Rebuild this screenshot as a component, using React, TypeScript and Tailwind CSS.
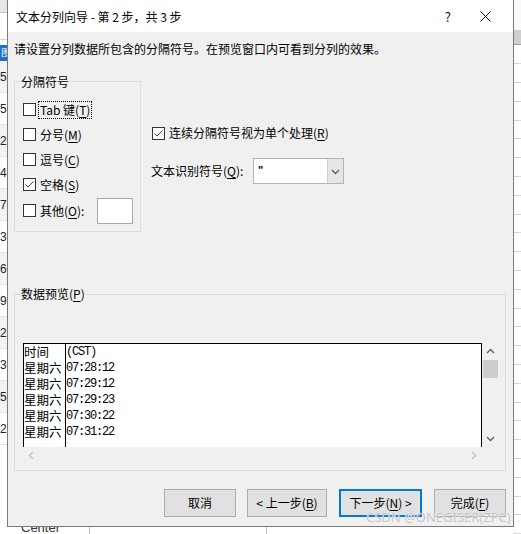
import React from "react";

const ui = "font-['Noto_Sans_CJK_SC','Noto_Sans',sans-serif]";

function Check({ checked }: { checked?: boolean }) {
  return (
    <span className="w-[13px] h-[13px] border border-[#333] bg-white flex items-center justify-center shrink-0">
      {checked && (
        <svg width="11" height="11" viewBox="0 0 11 11">
          <path d="M1.5 5.5 L4 8 L9.5 2.5" fill="none" stroke="#444" strokeWidth="1" />
        </svg>
      )}
    </span>
  );
}

function K({ k }: { k: string }) {
  return <u className="underline-offset-[2px]">{k}</u>;
}

function Chevron({ dir, color = "#606060" }: { dir: "up" | "down" | "left" | "right"; color?: string }) {
  const d = {
    up: "M1 6 L4.5 2.5 L8 6",
    down: "M1 3 L4.5 6.5 L8 3",
    left: "M6 1 L2.5 4.5 L6 8",
    right: "M3 1 L6.5 4.5 L3 8",
  }[dir];
  return (
    <svg width="9" height="9" viewBox="0 0 9 9">
      <path d={d} fill="none" stroke={color} strokeWidth="1.4" />
    </svg>
  );
}

/* spreadsheet visible behind the dialog */
function Backdrop() {
  const leftRows = ["53", "57", "29", "44", "74", "31", "61", "99", "29", "38", "57", "22"];
  return (
    <div className="absolute inset-0 bg-white">
      {/* left strip */}
      <div className="absolute left-0 top-0 w-[8px] h-full flex flex-col text-[12px] text-[#222] font-['Liberation_Sans',sans-serif]">
        <div className="h-[13px] bg-[#e6e6e6] border-b border-[#c8c8c8]" />
        <div className="h-[27px] bg-white border-b border-[#d0d0d0]" />
        <div className="h-[5px]" />
        <div className="h-[16px] bg-[#1f6fc2] text-white text-[10px] leading-[16px] pl-[1px]">图</div>
        {leftRows.map((n, i) => (
          <div
            key={i}
            className={
              "h-[32px] leading-[32px] overflow-hidden whitespace-nowrap border-b border-[#e0e0e0] " +
              (i % 2 === 0 ? "bg-[#f2f2f2]" : "bg-white")
            }
          >
            {n}
          </div>
        ))}
      </div>
      {/* right strip */}
      <div className="absolute right-0 top-0 w-[8px] h-full flex flex-col">
        <div className="h-[30px] bg-[#fafafa]" />
        <div className="h-[16px] bg-[#cfcfcf] border-b border-[#a0a0a0]" />
        {Array.from({ length: 26 }).map((_, i) => (
          <div key={i} className="h-[19px] border-b border-[#d6d6d6]" />
        ))}
      </div>
      {/* bottom strip */}
      <div className="absolute left-[21px] top-[518px] text-[13px] text-[#333] font-['Liberation_Sans',sans-serif]">
        Center
      </div>
      <div className="absolute left-[89px] top-[527px] w-px h-[8px] bg-[#bdbdbd]" />
      <div className="absolute left-[266px] top-[527px] w-px h-[8px] bg-[#bdbdbd]" />
    </div>
  );
}

export default function App() {
  const col1 = ["时间", "星期六", "星期六", "星期六", "星期六", "星期六"];
  const col2 = ["(CST)", "07:28:12", "07:29:12", "07:29:23", "07:30:22", "07:31:22"];

  return (
    <div className={"relative w-[521px] h-[534px] overflow-hidden text-[12px] text-black " + ui}>
      <Backdrop />

      {/* dialog window */}
      <div className="absolute left-[7px] top-[-1px] w-[507px] h-[528px] border border-[#7a7a7a] bg-[#f0f0f0] flex flex-col">
        {/* title bar */}
        <div className="h-[32px] bg-white flex items-center pt-[1px] shrink-0">
          <span className="pl-[8px] leading-[14px]">文本分列向导 - 第 2 步，共 3 步</span>
          <span className="ml-auto mr-[29px] text-[13px] leading-[14px] text-[#111]">?</span>
          <svg width="11" height="11" viewBox="0 0 11 11" className="mr-[22px]">
            <path d="M0.5 0.5 L10.5 10.5 M10.5 0.5 L0.5 10.5" stroke="#111" strokeWidth="1" />
          </svg>
        </div>

        {/* body */}
        <div className="flex flex-col pl-[6px] pr-[7px]">
          <p className="mt-[10px] leading-[14px]">请设置分列数据所包含的分隔符号。在预览窗口内可看到分列的效果。</p>

          <div className="flex mt-[25px]">
            {/* 分隔符号 group */}
            <div className="relative w-[127px] h-[151px] border border-[#dcdcdc] pl-[8px] pr-[7px] pt-[15px] flex flex-col">
              <span className="absolute top-[-7px] left-[5px] px-[1px] bg-[#f0f0f0] leading-[14px]">分隔符号</span>
              <div className="flex items-center h-[25px]">
                <Check />
                <span className="ml-[2px] border border-dotted border-black px-[1px] leading-[16px]">
                  Tab 键(<K k="T" />)
                </span>
              </div>
              <div className="flex items-center h-[25px]">
                <Check />
                <span className="ml-[4px]">分号(<K k="M" />)</span>
              </div>
              <div className="flex items-center h-[25px]">
                <Check />
                <span className="ml-[4px]">逗号(<K k="C" />)</span>
              </div>
              <div className="flex items-center h-[25px]">
                <Check checked />
                <span className="ml-[4px]">空格(<K k="S" />)</span>
              </div>
              <div className="flex items-center h-[27px]">
                <Check />
                <span className="ml-[4px]">其他(<K k="O" />):</span>
                <span className="ml-auto w-[36px] h-[26px] bg-white border border-[#a8a8a8]" />
              </div>
            </div>

            {/* right options */}
            <div className="ml-[10px] pt-[42px] flex flex-col">
              <div className="flex items-center h-[20px] ml-[1px]">
                <Check checked />
                <span className="ml-[4px]">连续分隔符号视为单个处理(<K k="R" />)</span>
              </div>
              <div className="flex items-center mt-[15px]">
                <span className="w-[102px]">文本识别符号(<K k="Q" />):</span>
                <div className="w-[91px] h-[26px] bg-white border border-[#b4b4b4] flex">
                  <span className="flex-1 pl-[4px] leading-[22px] font-['Liberation_Sans',sans-serif] font-bold text-[11px]">"</span>
                  <span className="w-[16px] h-full bg-[#e5e5e5] border-l border-[#cfcfcf] flex items-center justify-center">
                    <Chevron dir="down" />
                  </span>
                </div>
              </div>
            </div>
          </div>

          {/* 数据预览 group */}
          <div className="relative mt-[62px] h-[177px] border border-[#dcdcdc] pl-[8px] pr-[6px] pt-[48px] flex flex-col">
            <span className="absolute top-[-8px] left-[5px] px-[1px] bg-[#f0f0f0] leading-[14px]">
              数据预览(<K k="P" />)
            </span>
            <div className="flex flex-col">
              <div className="flex h-[104px]">
                <div className="flex-1 bg-white border-l border-t border-r border-black flex overflow-hidden">
                  <div className="w-[42px] border-r border-black flex flex-col">
                    {col1.map((t, i) => (
                      <span key={i} className="h-[16px] leading-[16px] text-[12.5px] whitespace-nowrap">
                        {t}
                      </span>
                    ))}
                  </div>
                  <div className="flex-1 flex flex-col">
                    {col2.map((t, i) => (
                      <span
                        key={i}
                        className="h-[16px] leading-[16px] text-[12px] tracking-[-1.2px] font-['Liberation_Mono','Noto_Sans_CJK_SC',monospace] whitespace-nowrap"
                      >
                        {t}
                      </span>
                    ))}
                  </div>
                </div>
                {/* vertical scrollbar */}
                <div className="w-[17px] flex flex-col items-center">
                  <span className="h-[17px] flex items-center justify-center">
                    <Chevron dir="up" />
                  </span>
                  <span className="w-[15px] h-[18px] bg-[#cdcdcd]" />
                  <span className="mt-auto h-[17px] flex items-center justify-center">
                    <Chevron dir="down" />
                  </span>
                </div>
              </div>
              {/* horizontal scrollbar */}
              <div className="flex h-[16px]">
                <div className="flex-1 flex items-center justify-between px-[4px]">
                  <Chevron dir="left" color="#c2c2c2" />
                  <Chevron dir="right" color="#c2c2c2" />
                </div>
                <div className="w-[17px]" />
              </div>
            </div>
          </div>

          {/* buttons */}
          <div className="flex justify-end mt-[18px] gap-[11px]">
            <button className="w-[72px] h-[28px] bg-[#e1e1e1] border border-[#adadad]">取消</button>
            <button className="w-[80px] h-[28px] bg-[#e1e1e1] border border-[#adadad] mr-[1px]">
              &lt; 上一步(<K k="B" />)
            </button>
            <button className="w-[83px] h-[28px] bg-[#e1e1e1] border-2 border-[#0078d7] mr-[1px]">
              下一步(<K k="N" />) &gt;
            </button>
            <button className="w-[72px] h-[28px] bg-[#e1e1e1] border border-[#adadad]">
              完成(<K k="F" />)
            </button>
          </div>
        </div>
      </div>

      {/* watermark */}
      <div className="absolute left-[366px] top-[508px] text-[13px] leading-[18px] text-[#c4c4c4] font-['Noto_Sans',sans-serif] [text-shadow:0_0_1px_#fff]">
        CSDN @ONEGISER(ZPC)
      </div>
    </div>
  );
}
